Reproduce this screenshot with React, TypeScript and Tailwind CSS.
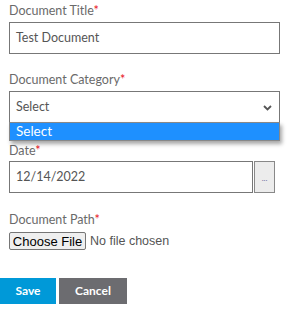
import React from "react";

const Label = ({ text }: { text: string }) => (
  <div className="text-[12.5px] leading-[16px] text-[#6a6a6a]">
    {text}
    <span className="text-[#e81123]">*</span>
  </div>
);

export default function App() {
  return (
    <div
      className="w-[288px] h-[309px] bg-white relative overflow-hidden"
      style={{ fontFamily: 'Lato, "Open Sans", sans-serif' }}
    >
      <div className="pl-[9px] pr-[8px] pt-[3px] flex flex-col">
        <Label text="Document Title" />
        <div className="mt-[3px] h-[32px] w-[271px] border border-[#777] flex items-center px-[6px] text-[12.5px] text-[#555]">
          Test Document
        </div>

        <div className="mt-[18px]">
          <Label text="Document Category" />
        </div>
        <div className="relative mt-[3px]">
          <div className="h-[32px] w-[271px] border border-[#777] flex items-center justify-between pl-[6px] pr-[7px] text-[12.5px] text-[#555] pt-[1px]">
            <span>Select</span>
            <svg width="9" height="6" viewBox="0 0 9 6">
              <path d="M1 1 L4.5 4.5 L8 1" stroke="#555" strokeWidth="1.8" fill="none" />
            </svg>
          </div>
          <div className="absolute left-0 top-[31px] w-[271px] h-[19px] bg-[#1e90ff] border border-[#888] shadow-[2px_3px_4px_rgba(0,0,0,0.35)] flex items-center px-[6px] text-[13.5px] text-white z-10">
            Select
          </div>
        </div>

        <div className="mt-[20px]">
          <Label text="Date" />
        </div>
        <div className="mt-[2px] flex">
          <div className="h-[32px] w-[244px] border border-[#777] flex items-center px-[6px] text-[12.5px] text-[#555]">
            12/14/2022
          </div>
          <div className="h-[32px] w-[21px] ml-[1px] border border-[#888] bg-[#ececec] flex items-center justify-center text-[8px] text-[#6a6aa0] pt-[2px]">
            ...
          </div>
        </div>

        <div className="mt-[19px]">
          <Label text="Document Path" />
        </div>
        <div
          className="mt-[4px] flex items-center text-[12px]"
          style={{ fontFamily: '"Liberation Sans", Arial, sans-serif' }}
        >
          <div className="h-[18px] w-[77px] border border-[#767676] rounded-[2px] bg-[#efefef] flex items-center justify-center text-black text-[13px]">
            Choose File
          </div>
          <span className="ml-[4px] text-[#555] text-[12.5px]">No file chosen</span>
        </div>
      </div>

      <div className="flex mt-[27px] gap-[3px]">
        <div className="h-[26px] w-[56px] bg-[#0099d8] text-white font-bold text-[12px] flex items-center justify-center">
          Save
        </div>
        <div className="h-[26px] w-[68px] bg-[#6c6c70] text-white font-bold text-[12px] flex items-center justify-center">
          Cancel
        </div>
      </div>
    </div>
  );
}
